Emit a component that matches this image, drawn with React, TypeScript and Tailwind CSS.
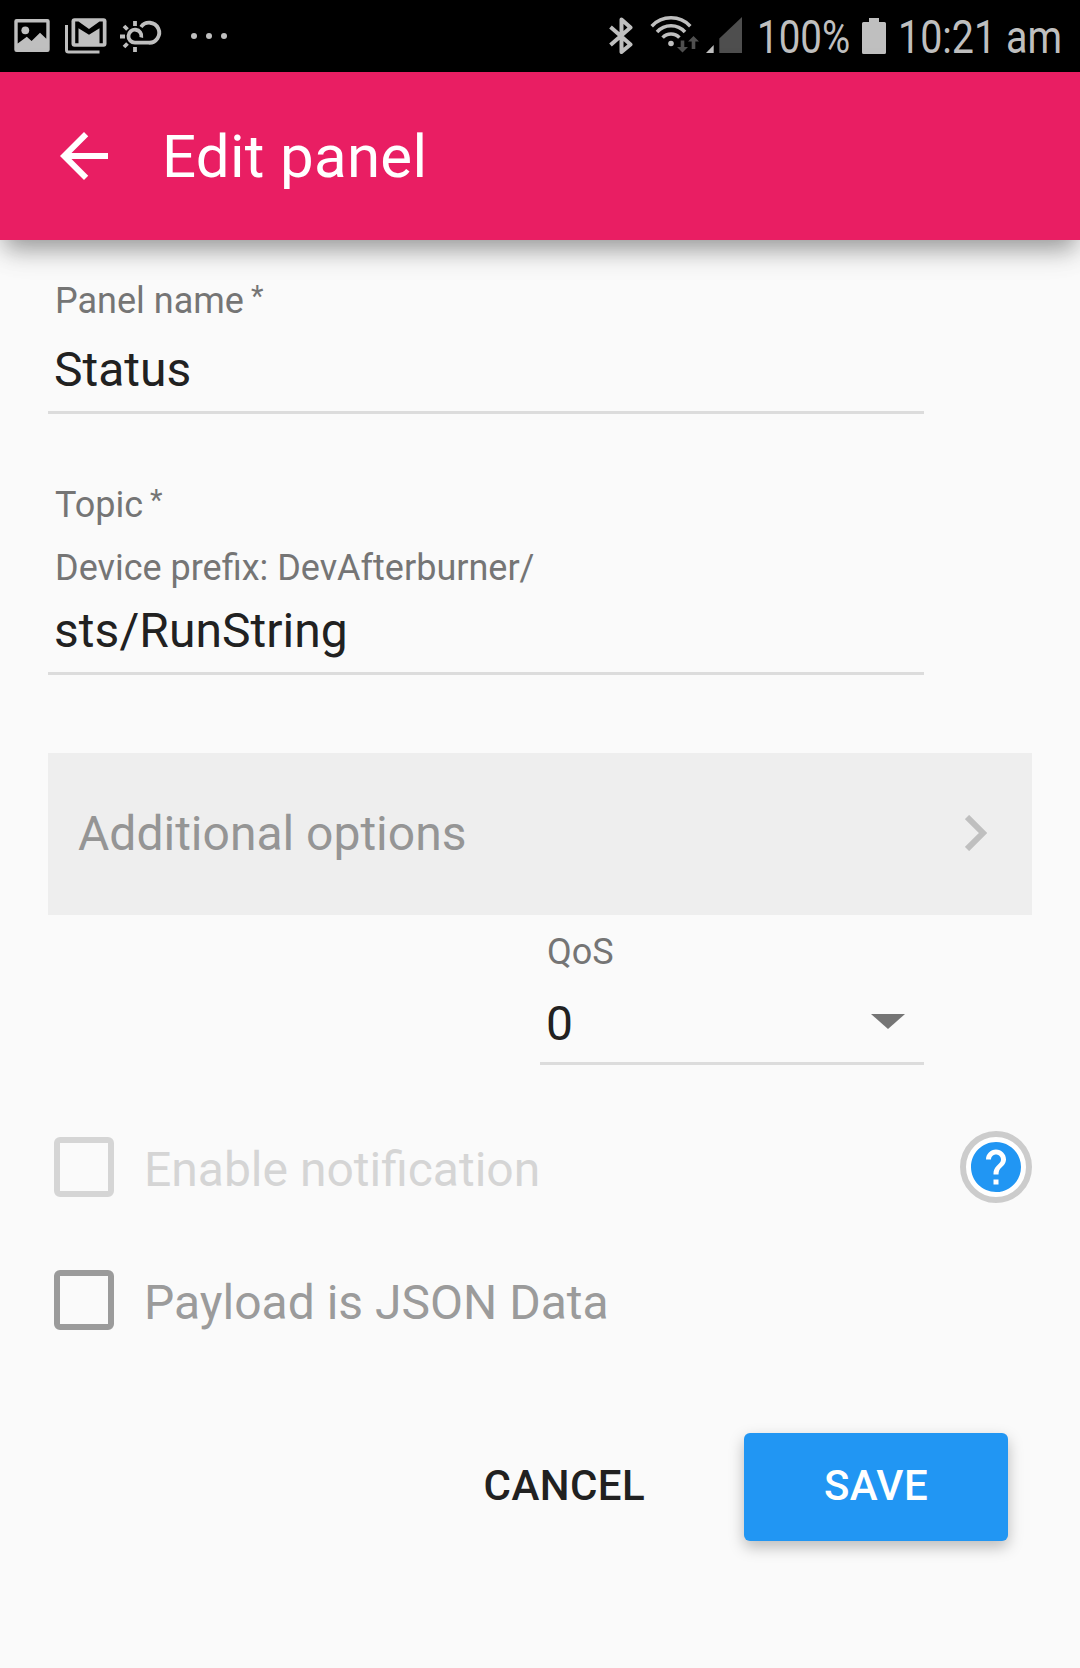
import type { ReactNode } from "react";

const GREY = "#bfbfbf";

function PictureIcon() {
  return (
    <svg className="h-[36px] w-[36px]" viewBox="0 0 36 36" fill={GREY}>
      <path
        fillRule="evenodd"
        d="M2.600 1h30.800q2.300 0 2.300 2.300v28.400q0 2.300-2.300 2.300H2.600Q.3 34 .3 31.700V3.300Q.3 1 2.600 1ZM3.700 4.500V25.500L12.800 18.700L17.600 23L26 14.800L32.300 20.800V4.500Z"
      />
      <circle cx="11.300" cy="12.300" r="3.900" />
    </svg>
  );
}

function MailIcon() {
  return (
    <svg className="h-[38px] w-[44px]" viewBox="0 0 44 38">
      <path d="M2.500 8V33q0 2 2 2H35.500" fill="none" stroke={GREY} strokeWidth="3" />
      <rect x="7.500" y="1.300" width="35" height="28.400" rx="3" fill={GREY} />
      <path d="M11.200 4.600H14.500L25 12L35.500 4.600H38.800V26.300H35.500V11.300L25 17.800L14.500 11.300V26.300H11.200Z" fill="#000" />
    </svg>
  );
}

function WeatherIcon() {
  return (
    <svg
      className="h-[34px] w-[44px]"
      viewBox="0 0 44 34"
      fill="none"
      stroke={GREY}
      strokeWidth="3.800"
    >
      <path d="M22.300 17.500A6.500 6.500 0 1 0 16 22.700H29.500A10 10 0 1 0 22 7" />
      <path d="M16 1V6M16 27V32M1 16.500H6M5 6L8.500 9.500M5 27L8.500 23.500" />
    </svg>
  );
}

function BluetoothIcon() {
  return (
    <svg
      className="h-[40px] w-[24px]"
      viewBox="0 0 24 40"
      fill="none"
      stroke={GREY}
      strokeWidth="4"
    >
      <path d="M1.500 11L21.500 28.500L12.500 36V3.500L21.500 11.500L1.500 29" strokeLinejoin="round" />
    </svg>
  );
}

function WifiIcon() {
  return (
    <svg className="h-[38px] w-[50px]" viewBox="0 0 50 38" fill="none" stroke={GREY} strokeWidth="3.500">
      <path d="M1.700 11.200A26.500 26.500 0 0 1 40.300 11.200" />
      <path d="M7 17A19 19 0 0 1 35 17" />
      <path d="M12.600 22.600A11.500 11.500 0 0 1 29.400 22.600" />
      <circle cx="21" cy="28.500" r="2.800" fill={GREY} stroke="none" />
      <g fill="#505050" stroke="none">
        <path d="M30.700 25.500H34.300V32H38L32.500 37.500L27 32H30.700Z" />
        <path d="M41.700 34H45.300V26.500H49L43.500 21L38 26.500H41.700Z" />
      </g>
    </svg>
  );
}

function SignalIcon() {
  return (
    <svg className="h-[37px] w-[36px]" viewBox="0 0 36 37">
      <path d="M7.700 28V36H0Z" fill={GREY} />
      <path d="M36 0V36H13.300V21.500Z" fill="#4e4e4e" />
    </svg>
  );
}

function BatteryIcon() {
  return (
    <svg className="h-[36px] w-[24px]" viewBox="0 0 24 36" fill={GREY}>
      <path d="M7 0H17V4H22.500Q24 4 24 5.500V34.500Q24 36 22.500 36H1.500Q0 36 0 34.500V5.500Q0 4 1.500 4H7Z" />
    </svg>
  );
}

function StatusBar() {
  return (
    <div className="flex h-[72px] items-start bg-black text-[46px] leading-[75px] text-[#bfbfbf]">
      <div className="ml-[14px] mt-[18px]"><PictureIcon /></div>
      <div className="ml-[14px] mt-[17px]"><MailIcon /></div>
      <div className="ml-[11px] mt-[20px]"><WeatherIcon /></div>
      <div className="ml-[28px] mt-[33px] flex gap-[9px]">
        <span className="size-[6px] rounded-full bg-[#bfbfbf]" />
        <span className="size-[6px] rounded-full bg-[#bfbfbf]" />
        <span className="size-[6px] rounded-full bg-[#bfbfbf]" />
      </div>
      <div className="ml-[382px] mt-[16px]"><BluetoothIcon /></div>
      <div className="ml-[17px] mt-[15px]"><WifiIcon /></div>
      <div className="ml-[6px] mt-[17px]"><SignalIcon /></div>
      <div className="ml-[15px] w-[105px]">
        <span className="inline-block origin-left scale-x-[0.837] whitespace-nowrap">100%</span>
      </div>
      <div className="mt-[18px]"><BatteryIcon /></div>
      <div className="ml-[12px] w-[170px]">
        <span className="inline-block origin-left scale-x-[0.857] whitespace-nowrap">10:21 am</span>
      </div>
    </div>
  );
}

function Header() {
  return (
    <header className="relative flex h-[168px] items-center bg-[#e91e63] text-white shadow-[0_14px_22px_-5px_rgba(0,0,0,0.34),0_8px_36px_0_rgba(0,0,0,0.09)]">
      <svg className="ml-[48px] size-[72px]" viewBox="0 0 24 24" fill="currentColor">
        <path d="M20 11H7.830l5.590-5.590L12 4l-8 8 8 8 1.410-1.410L7.830 13H20v-2z" />
      </svg>
      <h1 className="ml-[42px] pt-[2px] text-[60px] leading-[72px] tracking-[0.3px]">Edit panel</h1>
    </header>
  );
}

function Label({ children, required }: { children: ReactNode; required?: boolean }) {
  return (
    <div className="text-[36px] leading-[42px] text-[#757575]">
      {children}
      {required && <span className="ml-[7px] align-[7px] text-[29px] leading-none">*</span>}
    </div>
  );
}

function CheckRow({ label, disabled }: { label: string; disabled?: boolean }) {
  return (
    <label className="flex h-[60px] items-center">
      <span
        className={
          disabled
            ? "size-[60px] rounded-[6px] border-[6px] border-[#d5d5d5]"
            : "size-[60px] rounded-[6px] border-[6px] border-[#9b9b9b]"
        }
      />
      <span
        className={
          disabled
            ? "ml-[30px] mt-[5px] text-[48px] leading-[56px] text-[#d5d5d5]"
            : "ml-[30px] mt-[5px] text-[48px] leading-[56px] text-[#9b9b9b]"
        }
      >
        {label}
      </span>
    </label>
  );
}

export default function App() {
  return (
    <div className="h-[1668px] w-[1080px] overflow-hidden bg-[#fafafa] font-[Roboto,sans-serif] text-[#212121]">
      <StatusBar />
      <Header />
      <main className="px-[48px] pt-[40px]">
        <div className="h-[134px] w-[876px] border-b-[3px] border-[#dcdcdc] pl-[6px]">
          <div className="pl-px"><Label required>Panel name</Label></div>
          <div className="mt-[21px] text-[48px] leading-[54px]">Status</div>
        </div>

        <div className="mt-[70px] h-[191px] w-[876px] border-b-[3px] border-[#dcdcdc] pl-[6px]">
          <div className="pl-px"><Label required>Topic</Label></div>
          <div className="mt-[21px] pl-px"><Label>Device prefix: DevAfterburner/</Label></div>
          <div className="mt-[15px] text-[48px] leading-[54px] tracking-[0.05px]">sts/RunString</div>
        </div>

        <div className="mt-[78px] flex h-[162px] items-center justify-between bg-[#eeeeee] pl-[30px] pr-[45px] text-[48px] leading-[56px] text-[#959595]">
          <span>Additional options</span>
          <svg className="mt-[-2px] h-[36px] w-[22px]" viewBox="0 0 22 36" fill="none" stroke="#bfbfbf" strokeWidth="6">
            <path d="M2 2L18 18L2 34" />
          </svg>
        </div>

        <div className="ml-[492px] mt-[16px] h-[134px] w-[384px] border-b-[3px] border-[#dcdcdc] pl-[6px] pr-[19px]">
          <div className="pl-px"><Label>QoS</Label></div>
          <div className="mt-[24px] flex items-center justify-between text-[48px] leading-[54px]">
            <span>0</span>
            <svg className="mt-[-6px] h-[15px] w-[34px]" viewBox="0 0 34 15" fill="#757575">
              <path d="M0 0H34L17 15Z" />
            </svg>
          </div>
        </div>

        <div className="mt-[66px] flex h-[72px] items-center justify-between pl-[6px]">
          <CheckRow label="Enable notification" disabled />
          <button className="flex size-[72px] items-center justify-center rounded-full border-[6px] border-[#cccccc] bg-white">
            <svg className="size-[60px]" viewBox="0 0 24 24" fill="#2196f3">
              <path d="M12 2C6.480 2 2 6.480 2 12s4.480 10 10 10 10-4.480 10-10S17.520 2 12 2zm1 17h-2v-2h2v2zm2.070-7.750l-.9.920C13.450 12.900 13 13.500 13 15h-2v-.5c0-1.100.450-2.100 1.170-2.830l1.240-1.260c.370-.360.590-.860.590-1.410 0-1.100-.9-2-2-2s-2 .9-2 2H8c0-2.210 1.790-4 4-4s4 1.790 4 4c0 .880-.360 1.680-.930 2.250z" />
            </svg>
          </button>
        </div>

        <div className="mt-[67px] pl-[6px]">
          <CheckRow label="Payload is JSON Data" />
        </div>

        <div className="mt-[103px] flex items-center justify-end pr-[24px] text-[42px] font-medium leading-[106px] tracking-[0.42px]">
          <button className="mr-[99px] h-[108px] pb-[2px]">CANCEL</button>
          <button className="h-[108px] w-[264px] rounded-[6px] bg-[#2196f3] pb-[2px] text-white shadow-[0_6px_15px_0_rgba(0,0,0,0.26)]">
            SAVE
          </button>
        </div>
      </main>
    </div>
  );
}
